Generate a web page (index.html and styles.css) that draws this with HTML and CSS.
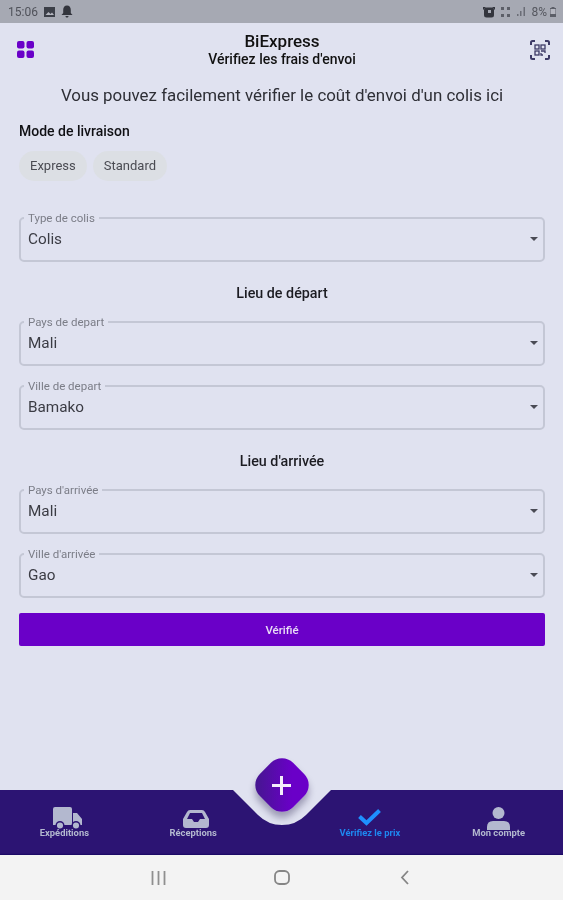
FILE: index.html
```html
<!DOCTYPE html>
<html lang="fr">
<head>
<meta charset="utf-8">
<title>BiExpress</title>
<link rel="stylesheet" href="styles.css">
</head>
<body>
<div class="screen">
  <div class="status">
    <div class="status-side">
      <span class="time">15:06</span>
      <svg class="si" width="13" height="12" viewBox="0 0 13 12"><path d="M1 1h11v10H1z" fill="#3c3f48"/><path d="M2.500 9l3-3 2 2 1.500-1.500L11 9z" fill="#b5b7c0"/></svg>
      <svg class="si" width="12" height="13" viewBox="0 0 12 13"><path d="M6 .5c2.500 0 3.800 2 3.800 4.500v3L11.500 10h-11L2.200 8V5C2.200 2.500 3.500 .5 6 .5zM4.500 11h3c0 1-.7 1.600-1.500 1.600S4.500 12 4.500 11z" fill="#33353d"/></svg>
    </div>
    <div class="status-side">
      <svg class="si" width="12" height="12" viewBox="0 0 12 12"><rect x="1" y="1.500" width="10" height="10" rx="2.500" fill="#33353d"/><path d="M0 1h3L0 4zM12 1H9l3 3z" fill="#33353d"/><rect x="5" y="4" width="3" height="3" fill="#a6a9b3"/></svg>
      <svg class="si" width="11" height="12" viewBox="0 0 11 12"><path d="M1 1h3v3H1zM7 1h3v3H7zM1 8h3v3H1zM7 8h3v3H7z" fill="#5c5f68"/></svg>
      <svg class="si" width="10" height="11" viewBox="0 0 10 11"><path d="M1 10h1.500V8H1zM4 10h1.500V5H4zM7.500 10H9V1H7.500z" fill="#6a6d76"/></svg>
      <span class="batt">8%</span>
      <svg class="si" width="8" height="12" viewBox="0 0 8 12"><path d="M2.500 1h3v1H7v9H1V2h1.500z" fill="#5c5f68"/><path d="M1.500 3h5v5h-5z" fill="#b5b7c0"/></svg>
    </div>
  </div>

  <div class="app">
    <header class="topbar">
      <svg class="grid-icon" width="17" height="17" viewBox="0 0 17 17"><rect width="7.500" height="7.500" rx="2"/><rect x="9.500" width="7.500" height="7.500" rx="2"/><rect y="9.500" width="7.500" height="7.500" rx="2"/><rect x="9.500" y="9.500" width="7.500" height="7.500" rx="2"/></svg>
      <div class="titles">
        <div class="title">BiExpress</div>
        <div class="subtitle">Vérifiez les frais d'envoi</div>
      </div>
      <svg class="scan-icon" width="20" height="20" viewBox="0 0 20 20" fill="none" stroke="#3d3a66" stroke-width="1.300">
        <path d="M1 5V2.500Q1 1 2.500 1H5M15 1h2.500Q19 1 19 2.500V5M19 15v2.500Q19 19 17.500 19H15M5 19H2.500Q1 19 1 17.500V15" stroke-width="2"/>
        <rect x="5" y="5" width="4" height="4"/><rect x="11" y="5" width="4" height="4"/><rect x="5" y="11" width="4" height="4"/><path d="M11 11h4v2M11 13v2h2"/>
      </svg>
    </header>

    <main class="content">
      <p class="intro">Vous pouvez facilement vérifier le coût d'envoi d'un colis ici</p>
      <h2 class="mode">Mode de livraison</h2>
      <div class="chips">
        <span class="chip">Express</span>
        <span class="chip">Standard</span>
      </div>

      <div class="field first">
        <span class="legend">Type de colis</span>
        <span class="value">Colis</span>
        <span class="caret"></span>
      </div>

      <h3 class="section">Lieu de départ</h3>
      <div class="field">
        <span class="legend">Pays de depart</span>
        <span class="value">Mali</span>
        <span class="caret"></span>
      </div>
      <div class="field gap">
        <span class="legend">Ville de depart</span>
        <span class="value">Bamako</span>
        <span class="caret"></span>
      </div>

      <h3 class="section">Lieu d'arrivée</h3>
      <div class="field">
        <span class="legend">Pays d'arrivée</span>
        <span class="value">Mali</span>
        <span class="caret"></span>
      </div>
      <div class="field gap">
        <span class="legend">Ville d'arrivée</span>
        <span class="value">Gao</span>
        <span class="caret"></span>
      </div>

      <button class="submit" type="button">Vérifié</button>
    </main>

    <nav class="tabbar">
      <svg class="notch" width="563" height="65" viewBox="0 0 563 65">
        <path d="M0 0H233L258 25Q268 35 282 35Q296 35 306 25L331 0H563V65H0Z" fill="#2c1473"/>
        <path d="M0 64.500H563" stroke="#1c0a66" stroke-width="1.500"/>
      </svg>
      <div class="tab">
        <svg class="ic-truck" width="29" height="23" viewBox="0 0 29 23"><path d="M0 2Q0 0 2 0H17Q19 0 19 2V18H0zM20 6h4l5 6v6H20z" fill="#b3b8cf"/><circle cx="7" cy="18.500" r="3.800" fill="#b3b8cf" stroke="#2c1473" stroke-width="1.500"/><circle cx="23" cy="18.500" r="3.800" fill="#b3b8cf" stroke="#2c1473" stroke-width="1.500"/></svg>
        <span>Expéditions</span>
      </div>
      <div class="tab">
        <svg class="ic-inbox" width="28" height="18" viewBox="0 0 28 18"><path d="M8 0h12q2 0 3 2l4 7v6q0 3-3 3H4q-3 0-3-3V9l4-7q1-2 3-2z" fill="#b3b8cf"/><path d="M8 3h12l3 6h-5l-2 3h-4l-2-3H5z" fill="#2c1473"/></svg>
        <span>Réceptions</span>
      </div>
      <div class="tab-spacer"></div>
      <div class="tab active">
        <svg class="ic-check" width="23" height="17" viewBox="0 0 23 17"><path d="M1.500 7.500l7 6.500L21.500 1.500" fill="none" stroke="#1e90ff" stroke-width="4"/></svg>
        <span>Vérifiez le prix</span>
      </div>
      <div class="tab">
        <svg class="ic-person" width="23" height="23" viewBox="0 0 23 23"><circle cx="11.500" cy="6" r="6" fill="#b3b8cf"/><path d="M0 23v-3q0-6 6-6h11q6 0 6 6v3z" fill="#b3b8cf"/></svg>
        <span>Mon compte</span>
      </div>
      <button class="fab" type="button"></button>
      <svg class="fab-plus" width="19" height="19" viewBox="0 0 19 19"><path d="M9.500 0v19M0 9.500h19" stroke="#f3eefa" stroke-width="3"/></svg>
    </nav>
  </div>

  <div class="sysnav">
    <svg width="15" height="14" viewBox="0 0 15 14"><path d="M1.500 0v14M7.500 0v14M13.500 0v14" stroke="#8f8f8f" stroke-width="1.800"/></svg>
    <svg width="16" height="15" viewBox="0 0 16 15"><rect x="1" y="1" width="14" height="13" rx="4.500" fill="none" stroke="#858585" stroke-width="1.800"/></svg>
    <svg width="10" height="15" viewBox="0 0 10 15"><path d="M8 1L2 7.500 8 14" fill="none" stroke="#858585" stroke-width="1.800"/></svg>
  </div>
</div>
</body>
</html>
```
FILE: styles.css
```css
* { box-sizing: border-box; }
html, body { margin: 0; padding: 0; }
body { font-family: Roboto, "Liberation Sans", sans-serif; }
.screen { width: 563px; height: 900px; display: flex; flex-direction: column; overflow: hidden; background: #e0e2f0; filter: blur(.35px); }

.status { height: 23px; flex: none; background: #a6a9b3; display: flex; justify-content: space-between; align-items: center; padding: 0 6px 0 8px; color: #4e5058; }
.status-side { display: flex; align-items: center; gap: 5px; }
.time { font-size: 12px; color: #50525a; }
.batt { font-size: 12px; color: #55575f; margin-right: -3px; }
.si { display: block; }

.app { flex: 1; display: flex; flex-direction: column; min-height: 0; }
.topbar { height: 47px; flex: none; display: flex; align-items: center; justify-content: space-between; padding: 6px 13px 0 17px; }
.grid-icon { fill: #6a00c8; }
.titles { text-align: center; color: #111; }
.title { font-size: 17px; font-weight: 500; line-height: 18px; }
.subtitle { font-size: 14px; font-weight: 500; line-height: 18px; }

.content { flex: 1; padding: 0 18px 0 19px; display: flex; flex-direction: column; }
.intro { margin: 15px 0 0; font-size: 16.900px; line-height: 20px; text-align: center; color: #2e2f36; }
.mode { margin: 18px 0 0; font-size: 14px; font-weight: 500; line-height: 16px; color: #101014; }
.chips { display: flex; gap: 6px; margin-top: 12px; }
.chip { height: 30px; line-height: 30px; padding: 0 11px; border-radius: 15px; background: #dcdfe4; font-size: 13px; color: #4a4b52; }

.field { position: relative; height: 45px; border: 2px solid #c4c7d5; border-radius: 5px; padding: 0 7px 2px; display: flex; align-items: center; }
.field.first { margin-top: 36px; }
.field.gap { margin-top: 19px; }
.legend { position: absolute; left: 3px; top: -7px; padding: 0 4px; background: #e0e2f0; font-size: 11.500px; line-height: 12px; color: #7b7d87; }
.value { font-size: 15.300px; color: #3b3c44; }
.caret { position: absolute; right: 5px; top: 18px; width: 0; height: 0; border-left: 4.500px solid transparent; border-right: 4.500px solid transparent; border-top: 4.500px solid #4a4b55; }

.section { margin: 22px 0 18px; height: 19px; font-size: 14.300px; line-height: 19px; font-weight: 500; text-align: center; color: #1c1c22; }

.submit { margin-top: 15px; height: 33px; border: 0; border-radius: 2px; background: #6a00c8; color: #e9dcf6; font: 500 11.500px Roboto, sans-serif; }

.tabbar { position: relative; height: 65px; flex: none; display: flex; align-items: flex-start; }
.notch { position: absolute; left: 0; top: 0; display: block; }
.tab { position: relative; flex: 1 1 0; display: flex; flex-direction: column; align-items: center; height: 100%; color: #b3b8cf; font-size: 9.400px; font-weight: 700; }
.tab svg { display: block; }
.tab span { line-height: 10px; position: absolute; top: 38px; white-space: nowrap; }
.ic-truck { margin: 17px 0 0 7px; }
.ic-inbox { margin: 20px 0 0 5px; }
.ic-check { margin: 19px 0 0 0; }
.ic-person { margin: 17px 0 0 0; }
.tab.active { color: #1e88f0; }
.tab-spacer { width: 48px; flex: none; }
.fab { position: absolute; left: 255px; top: -32px; width: 54px; height: 54px; border: 0; padding: 0; border-radius: 18px; background: linear-gradient(45deg, #3f1a86, #6a00c8 65%); transform: rotate(45deg) scale(0.87); box-shadow: 5px 5px 9px rgba(30, 20, 70, .35); }
.fab-plus { position: absolute; left: 272px; top: -14px; }

.sysnav { height: 45px; flex: none; background: #f3f3f3; display: grid; grid-template-columns: repeat(3, 123px); justify-content: center; justify-items: center; align-items: center; }
```
